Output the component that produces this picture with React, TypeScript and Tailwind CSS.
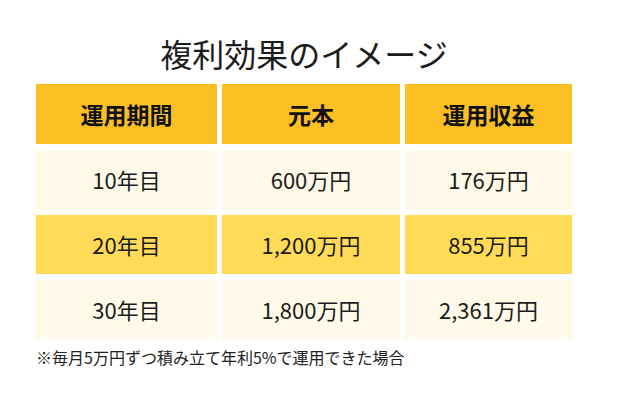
const rows = [
  { period: '10年目', principal: '600万円', gain: '176万円', tone: 'light' },
  { period: '20年目', principal: '1,200万円', gain: '855万円', tone: 'strong' },
  { period: '30年目', principal: '1,800万円', gain: '2,361万円', tone: 'light' },
];

const headers = ['運用期間', '元本', '運用収益'];

export default function App() {
  return (
    <div
      className="w-[620px] h-[420px] bg-white pl-[36px] pt-[33px] text-[#1c1c1c]"
      style={{ fontFamily: '"Noto Sans CJK JP", "Noto Sans", sans-serif' }}
    >
      <div className="w-[536px] flex flex-col">
        <h1 className="text-center text-[32px] leading-[40px] font-normal">複利効果のイメージ</h1>

        <div className="mt-[11px] grid grid-cols-[181px_178px_167px] gap-x-[5px] gap-y-[6px]">
          {headers.map(h => (
            <div
              key={h}
              className="h-[60px] bg-[#fbbf24] flex items-center justify-center text-[23px] font-bold text-[#111]"
            >
              {h}
            </div>
          ))}
          {rows.map(r =>
            [r.period, r.principal, r.gain].map((v, i) => (
              <div
                key={r.period + i}
                className={`h-[59px] flex items-center justify-center text-[22px] ${
                  r.tone === 'strong' ? 'bg-[#ffdb58]' : 'bg-[#fef9e8]'
                }`}
              >
                {v}
              </div>
            ))
          )}
        </div>

        <div className="mt-[7px] text-[16px] leading-[22px] text-[#222]">
          ※毎月5万円ずつ積み立て年利5%で運用できた場合
        </div>
      </div>
    </div>
  );
}
